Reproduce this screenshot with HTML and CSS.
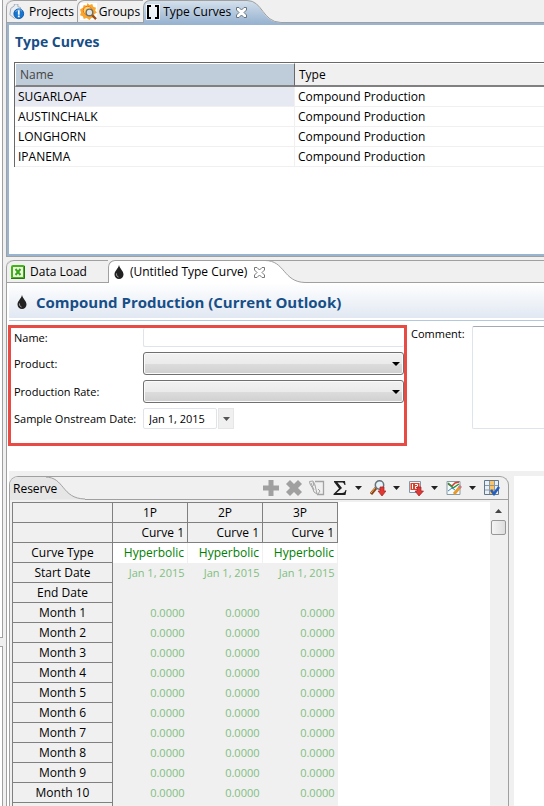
FILE: index.html
```html
<!DOCTYPE html>
<html lang="en">
<head>
<meta charset="utf-8">
<title>Type Curves</title>
<link rel="stylesheet" href="styles.css">
</head>
<body>
<div class="gutter"><div class="gutter-top"></div><div class="gutter-mid"></div><div class="gutter-bottom"></div></div>
<main class="workspace">
  <section class="pane pane-active">
    <nav class="tabs">
      <button class="tab tab-projects" type="button">
        <svg width="16" height="16" viewBox="0 0 18 18"><path d="M2 5l4-3V0h4v3l3 1 1 10-8 2-5-4z" fill="#e8edf2" stroke="#9aa7b4"/><circle cx="11" cy="11" r="5.500" fill="#1676cf" stroke="#0b56a5"/><path d="M7.500 9a4 4 0 0 1 7-1" stroke="#7ebcf0" fill="none"/><path d="M10 7h2v5h-2zM10 13h2v2h-2z" fill="#fff"/></svg>
        Projects</button>
      <button class="tab tab-groups" type="button">
        <svg width="17" height="17" viewBox="0 0 18 18"><rect width="18" height="18" fill="#fff"/><path d="M8 0l2 2 3-1 1 3 3 1-1 3 2 2-3 2v3l-3 1-2 2-3-2-3 1-1-3-3-1 1-3-1-3 3-2 1-3 3 1z" fill="#f9a62c"/><circle cx="8" cy="8" r="4.500" fill="#ffd36b" stroke="#f26d12"/><circle cx="10" cy="10" r="3.500" fill="#dfe4e6" stroke="#6f7069" stroke-width="1.500"/><path d="M13 13l4 4" stroke="#9a4c17" stroke-width="2.500"/></svg>
        Groups</button>
      <button class="tab tab-current" type="button">
        <svg width="14" height="16" viewBox="0 0 14 16"><rect width="14" height="16" fill="#fff" opacity=".75"/><path d="M5 2H2v12h3M9 2h3v12H9" fill="none" stroke="#000" stroke-width="2"/></svg>
        Type Curves
        <svg class="close" width="11" height="11" viewBox="0 0 11 11"><path d="M.5.5h2.500l2.500 2.500L8 .5h2.500V3L8 5.500 10.500 8v2.500H8L5.500 8 3 10.500H.5V8L3 5.500.5 3z" fill="#fff" stroke="#68747f"/></svg>
      </button>
      <svg class="swoop" width="34" height="23" viewBox="0 0 34 23"><defs><linearGradient id="blue" x2="0" y2="1"><stop stop-color="#d4e0ec"/><stop offset="1" stop-color="#99b4d1"/></linearGradient></defs><path d="M0 0h1C15 1 15 22 33 22.500V23H0z" fill="url(#blue)"/><path d="M0 .5C16 .5 15 22 34 22.500" fill="none" stroke="#a0a0a0"/></svg>
      <span class="tab-rest"></span>
    </nav>
    <div class="curves">
      <h1 class="heading">Type Curves</h1>
      <table class="list">
        <thead><tr><th class="sorted">Name</th><th>Type</th></tr></thead>
        <tbody>
          <tr><td class="chosen">SUGARLOAF</td><td>Compound Production</td></tr>
          <tr><td>AUSTINCHALK</td><td>Compound Production</td></tr>
          <tr><td>LONGHORN</td><td>Compound Production</td></tr>
          <tr><td>IPANEMA</td><td>Compound Production</td></tr>
        </tbody>
      </table>
    </div>
  </section>

  <section class="pane pane-editor">
    <nav class="tabs">
      <button class="tab tab-load" type="button">
        <svg width="14" height="14" viewBox="0 0 14 14"><rect x="1" y="1" width="12" height="12" rx="1" fill="#effbe4" stroke="#42b516" stroke-width="2"/><path d="M0 13.500h13.500V1" fill="none" stroke="#28750f"/><path d="M4.500 4l5 6M9.500 4l-5 6" stroke="#3aa61b" stroke-width="2"/></svg>
        Data Load</button>
      <button class="tab tab-current" type="button">
        <svg width="12" height="16" viewBox="0 0 12 16"><path d="M6 1c1 4 4.500 6 4.500 9.500a4.500 4.500 0 0 1-9 0C1.500 7 5 5 6 1z" fill="#222"/><path d="M3.500 9.500c0 2 .5 3 2 3.500" stroke="#aaa" fill="none"/></svg>
        (Untitled Type Curve)
        <svg class="close" width="11" height="11" viewBox="0 0 11 11"><path d="M.5.5h2.500l2.500 2.500L8 .5h2.500V3L8 5.500 10.500 8v2.500H8L5.500 8 3 10.500H.5V8L3 5.500.5 3z" fill="#fff" stroke="#777"/></svg>
      </button>
      <svg class="swoop" width="40" height="23" viewBox="0 0 40 23"><path d="M0 0C20 1 18 22 39 22.500V23H0z" fill="#fff"/><path d="M0 .5C20 .5 18 22 40 22.500" fill="none" stroke="#a0a0a0"/><path d="M0 .5H40" stroke="#a0a0a0"/></svg>
      <span class="tab-rest"></span>
    </nav>
    <header class="title">
      <svg width="12" height="16" viewBox="0 0 12 16"><path d="M6 1c1 4 4.500 6 4.500 9.500a4.500 4.500 0 0 1-9 0C1.500 7 5 5 6 1z" fill="#222"/><path d="M3.500 9.500c0 2 .5 3 2 3.500" stroke="#aaa" fill="none"/></svg>
      <h2 class="title-text">Compound Production (Current Outlook)</h2>
    </header>
    <form class="form">
      <div class="marked">
        <label for="name">Name:</label><input class="field name" id="name" type="text">
        <label for="product">Product:</label><span class="combo"><select id="product"><option></option></select></span>
        <label for="rate">Production Rate:</label><span class="combo"><select id="rate"><option></option></select></span>
        <label for="date">Sample Onstream Date:</label><span class="date"><input class="field" id="date" type="text" value="Jan 1, 2015"><button class="drop" type="button" aria-label="Choose date"><svg width="7" height="4" viewBox="0 0 7 4"><path d="M0 0h7L3.500 4z" fill="#555"/></svg></button></span>
      </div>
      <label class="comment-label" for="comment">Comment:</label>
      <textarea class="comment" id="comment"></textarea>
    </form>
    <div class="lower">
      <section class="folder">
        <div class="bar">
          <button class="reserve" type="button">Reserve</button>
          <svg class="swoop" width="40" height="23" viewBox="0 0 40 23"><path d="M0 0C20 1 16 22 39 22.500V23H0z" fill="#e6e6e6"/><path d="M0 .5C20 .5 16 22 40 22.500" fill="none" stroke="#a0a0a0"/></svg>
          <div class="tools">
            <button class="tool" type="button" aria-label="Add"><svg width="16" height="16" viewBox="0 0 16 16"><path d="M5.500 0h5v5.500H16v5h-5.500V16h-5v-5.500H0v-5h5.500z" fill="#a0a0a0"/></svg></button>
            <button class="tool" type="button" aria-label="Delete"><svg width="16" height="16" viewBox="0 0 16 16"><path d="M4 0l4 4 4-4 4 4-4 4 4 4-4 4-4-4-4 4-4-4 4-4-4-4z" fill="#a0a0a0"/></svg></button>
            <button class="tool" type="button" aria-label="Edit curve"><svg width="16" height="16" viewBox="0 0 16 16" fill="none" stroke="#a3a3a3"><path d="M6 1.500h8.500v13H8" stroke-width="1.300"/><path d="M.5 1.500L4 1l2 4 2 9-3-2L3.500 8 1 4zM2 3l3 7M4 2l1 4M9 9l2 2-2 3"/></svg></button>
            <button class="tool" type="button" aria-label="Sum"><svg width="16" height="16" viewBox="0 0 16 16"><path d="M2 1h11l.5 4h-1C12 3 11 2.500 9.500 2.500H5.500L10 8l-5.500 5H10c2 0 3-1 3.500-3h1L13.500 15H1.500v-1L7 8.500 2 2z" fill="#202020"/></svg></button>
            <button class="arrow" type="button" aria-label="Sum options"><svg width="7" height="4" viewBox="0 0 7 4"><path d="M0 0h7L3.500 4z" fill="#222"/></svg></button>
            <button class="tool" type="button" aria-label="Find"><svg width="16" height="16" viewBox="0 0 16 16"><path d="M6 8l-5 6" stroke="#8a431b" stroke-width="3"/><path d="M5 8l-4 5" stroke="#efb449"/><circle cx="9.500" cy="5" r="4.200" fill="#e5f2f8" stroke="#67727a" stroke-width="1.500"/><path d="M10 7h4v4h2l-4 5-4-5h2z" fill="#e03a32" stroke="#a81e1e" stroke-width=".7"/></svg></button>
            <button class="arrow" type="button" aria-label="Find options"><svg width="7" height="4" viewBox="0 0 7 4"><path d="M0 0h7L3.500 4z" fill="#222"/></svg></button>
            <button class="tool" type="button" aria-label="Dates"><svg width="16" height="16" viewBox="0 0 16 16"><path d="M1.500 1.500h11v11h-11z" fill="#f6f8fa" stroke="#8298aa"/><path d="M2.500 3h9v7h-9z" fill="#d9422b"/><path d="M4.500 4v5M7 4.500h2.500v2H7.500v2h2.500" stroke="#fff" fill="none"/><path d="M9 7h4v4h2.500L11 16l-4-5h2z" fill="#dc3b38" stroke="#a51c20" stroke-width=".7"/></svg></button>
            <button class="arrow" type="button" aria-label="Date options"><svg width="7" height="4" viewBox="0 0 7 4"><path d="M0 0h7L3.500 4z" fill="#222"/></svg></button>
            <button class="tool" type="button" aria-label="Chart"><svg width="16" height="16" viewBox="0 0 16 16"><path d="M1 1.500h13v13H1z" fill="#f7fafb" stroke="#889aa6"/><path d="M2 4l4 2 3-3 4-1" stroke="#cf4037" stroke-width="1.500" fill="none"/><path d="M2 3l5 5 6-4" stroke="#279442" stroke-width="1.500" fill="none"/><path d="M2 11l4-3 3 2" stroke="#3d87c8" fill="none"/><path d="M8 14l6-7" stroke="#e79a2c" stroke-width="3"/><path d="M13 8l2-2" stroke="#c77990" stroke-width="3"/></svg></button>
            <button class="arrow" type="button" aria-label="Chart options"><svg width="7" height="4" viewBox="0 0 7 4"><path d="M0 0h7L3.500 4z" fill="#222"/></svg></button>
            <button class="tool" type="button" aria-label="Columns"><svg width="16" height="16" viewBox="0 0 16 16"><path d="M.5.5h14v14H.5z" fill="#e9f0f5" stroke="#61788c"/><path d="M6 1h4v13H6z" fill="#ffc361"/><path d="M1 5.500h13M1 10h13M5.500 1v13M10.500 1v13" stroke="#8799a8"/><path d="M7 10l3 4 5-7" stroke="#245fc0" stroke-width="2.500" fill="none"/></svg></button>
          </div>
        </div>
        <div class="sheet-area">
          <table class="sheet">
            <colgroup><col class="col-label"><col class="col-case"><col class="col-case"><col class="col-case"></colgroup>
            <thead>
              <tr><th></th><th>1P</th><th>2P</th><th>3P</th></tr>
              <tr class="sub"><th></th><th>Curve 1</th><th>Curve 1</th><th>Curve 1</th></tr>
            </thead>
            <tbody>
              <tr class="kind"><th>Curve Type</th><td>Hyperbolic</td><td>Hyperbolic</td><td>Hyperbolic</td></tr>
              <tr><th>Start Date</th><td>Jan 1, 2015</td><td>Jan 1, 2015</td><td>Jan 1, 2015</td></tr>
              <tr><th>End Date</th><td></td><td></td><td></td></tr>
              <tr><th>Month 1</th><td>0.0000</td><td>0.0000</td><td>0.0000</td></tr>
              <tr><th>Month 2</th><td>0.0000</td><td>0.0000</td><td>0.0000</td></tr>
              <tr><th>Month 3</th><td>0.0000</td><td>0.0000</td><td>0.0000</td></tr>
              <tr><th>Month 4</th><td>0.0000</td><td>0.0000</td><td>0.0000</td></tr>
              <tr><th>Month 5</th><td>0.0000</td><td>0.0000</td><td>0.0000</td></tr>
              <tr><th>Month 6</th><td>0.0000</td><td>0.0000</td><td>0.0000</td></tr>
              <tr><th>Month 7</th><td>0.0000</td><td>0.0000</td><td>0.0000</td></tr>
              <tr><th>Month 8</th><td>0.0000</td><td>0.0000</td><td>0.0000</td></tr>
              <tr><th>Month 9</th><td>0.0000</td><td>0.0000</td><td>0.0000</td></tr>
              <tr><th>Month 10</th><td>0.0000</td><td>0.0000</td><td>0.0000</td></tr>
              <tr><th></th><td></td><td></td><td></td></tr>
            </tbody>
          </table>
          <div class="scroll">
            <svg width="7" height="4" viewBox="0 0 7 4"><path d="M0 4h7L3.500 0z" fill="#444"/></svg>
            <div class="thumb"></div>
          </div>
        </div>
      </section>
      <div class="blank"></div>
    </div>
  </section>
</main>
</body>
</html>
```

FILE: styles.css
```css
* { box-sizing: border-box; }

body {
  margin: 0;
  height: 100vh;
  overflow: hidden;
  display: flex;
  background: #f0f0f0;
  color: #000;
  font: 12px/16px "Open Sans", "Segoe UI", sans-serif;
}

button, input, select, textarea { font: inherit; color: inherit; margin: 0; }
button { border: 0; padding: 0; background: none; }
svg { display: block; flex: none; }
h1, h2 { margin: 0; }

/* Edge of the neighbouring view */
.gutter { width: 6px; flex: none; display: flex; flex-direction: column; padding-right: 3px; }
.gutter-top { flex: 639 0 0; background: #fff; border: solid #a0a0a0; border-width: 0 1px 1px 0; }
.gutter-mid { flex: 8 0 0; }
.gutter-bottom { flex: 159 0 0; background: #fff; border: solid #a0a0a0; border-width: 1px 1px 0 0; }

.workspace { flex: 1; min-width: 0; display: flex; flex-direction: column; gap: 3px; }

.pane { border-left: 1px solid #a0a0a0; border-top-left-radius: 7px; display: flex; flex-direction: column; background: #fff; }
.pane-active { min-height: 257px; border-bottom: 1px solid #a0a0a0; }
.pane-editor { flex: 1; min-height: 0; }

/* Tab strips */
.tabs { display: flex; height: 23px; background: #f0f0f0; border-top-left-radius: 7px; }
.tab {
  display: flex;
  align-items: center;
  gap: 5px;
  white-space: nowrap;
  border-bottom: 1px solid #a0a0a0;
  border-top: 1px solid #a0a0a0;
  border-top-left-radius: 7px;
}
.tab-projects { padding: 0 3px 0 2px; gap: 4px; }
.tab-groups { padding: 0 3px 0 2px; gap: 2px; border-left: 1px solid #a0a0a0; }
.tab-load { padding: 0 21px 0 4px; }
.tab-current { border-left: 1px solid #a0a0a0; border-bottom: 0; padding-left: 4px; background: #fff; }
.pane-active .tab-current { padding-left: 2px; gap: 3px; background: linear-gradient(#d4e0ec, #99b4d1); }
.close { margin-left: 2px; }
.tab-rest { flex: 1; border-bottom: 1px solid #a0a0a0; }
.pane-editor .tab-rest { border-top: 1px solid #a0a0a0; }

/* Type curve list */
.curves { flex: 1; border: solid #99b4d1; border-width: 2px 0 2px 2px; padding: 7px 0 0 5px; }
.heading { color: #174e87; font-size: 14px; line-height: 20px; padding-left: 1px; margin-bottom: 10px; }
.list { width: 100%; border-collapse: separate; border-spacing: 0; table-layout: fixed; border: solid #696969; border-width: 1px 0 0 1px; }
.list th {
  height: 24px;
  padding: 0 0 0 4px;
  font-weight: 400;
  text-align: left;
  background: #f0f0f0;
  border-bottom: 2px solid #808080;
  border-top: 1px solid #fff;
}
.list .sorted { width: 280px; background: #bfccda; color: #444; border-right: 1px solid #696969; border-left: 1px solid #fff; }
.list td { height: 20px; padding: 0 3px; border-bottom: 1px solid #f0f0f0; }
.list td:first-child { border-right: 1px solid #f0f0f0; }
.list .chosen { background: #e6e9f1; }

/* Editor title */
.title {
  margin-left: 2px;
  display: flex;
  align-items: center;
  gap: 8px;
  height: 38px;
  padding: 0 7px;
  background: linear-gradient(#fff, #e1e8f2 35px, #fff 35px);
  border-bottom: 1px solid #b4c8dc;
}
.title-text { color: #174e87; font-size: 15px; line-height: 20px; }

/* Form */
.form { display: flex; align-items: flex-start; padding: 4px 0 25px 1px; }
.marked {
  flex: none;
  width: 399px;
  border: 3px solid #e84a44;
  padding: 0 0 14px 3px;
  display: grid;
  grid-template-columns: 129px 1fr;
  row-gap: 5px;
  align-items: center;
}
.marked label { white-space: nowrap; font-size: 11px; }
.field { height: 21px; border: 1px solid #dfe3ea; border-radius: 2px; padding: 0 5px; background: #fff; }
.name { width: 100%; height: 19px; border-width: 0 0 1px 1px; }
.combo { position: relative; display: block; }
.combo select {
  display: block;
  appearance: none;
  width: 100%;
  height: 23px;
  border: 1px solid #707070;
  border-radius: 3px;
  background: linear-gradient(#f2f2f2, #ebebeb 50%, #dddddd 50%, #cfcfcf);
  box-shadow: inset 0 0 0 1px #fafafa;
}
.combo::after {
  content: "";
  position: absolute;
  right: 4px;
  top: 10px;
  border: solid transparent;
  border-width: 4px 4px 0;
  border-top-color: #000;
  pointer-events: none;
}
.date { display: flex; gap: 1px; }
.date .field { width: 74px; font-size: 11px; }
.drop { width: 16px; height: 21px; display: grid; place-items: center; background: #f0f0f0; border: 1px solid #e6e6e6; }
.comment-label { padding: 1px 5px 0 4px; flex: none; width: 65px; white-space: nowrap; font-size: 11px; }
.comment { flex: 1; min-width: 0; height: 103px; margin-top: 1px; border: solid #dfe3ea; border-width: 1px 0 1px 1px; border-top-color: #a8a8b0; resize: none; border-radius: 2px 0 0 2px; }

/* Reserve sheet */
.lower { flex: 1; min-height: 0; margin-left: 2px; padding-top: 5px; background: #f0f0f0; display: flex; gap: 5px; }
.folder { width: 500px; flex: none; border: 1px solid #a0a0a0; border-bottom: 0; border-radius: 9px 9px 0 0; display: flex; flex-direction: column; overflow: hidden; }
.blank { flex: 1; background: #fff; }
.bar { display: flex; height: 23px; flex: none; }
.reserve { position: relative; z-index: 1; padding: 0 0 0 3px; background: linear-gradient(90deg, #e6e6e6 36px, transparent 36px); }
.bar .swoop { margin: -1px 0 0 -12px; height: 24px; }
.tools { flex: 1; display: flex; justify-content: flex-end; padding-right: 5px; border-bottom: 1px solid #a0a0a0; }
.tool { width: 23px; display: grid; place-items: center; }
.arrow { width: 15px; display: grid; place-items: center; }
.sheet-area { flex: 1; min-height: 0; margin: 2px 2px 0 2px; background: #fff; display: flex; justify-content: space-between; align-items: stretch; overflow: hidden; }
.sheet { align-self: flex-start; width: 326px; border-collapse: collapse; table-layout: fixed; }
.col-label { width: 100px; }
.col-case { width: 75px; }
.sheet th, .sheet td { height: 20px; padding: 0 3px; line-height: 16px; background: #f0f0f0; }
.sheet th { border: 1px solid #808080; font-weight: 400; text-align: center; }
.sheet .sub th { text-align: right; }
.sheet td { text-align: right; color: #7fbf7f; font-size: 11px; }
.sheet .kind td { background: #fff; color: #008000; border-right: 1px solid #f0f0f0; font-size: 12px; }
.scroll { width: 16px; background: #f0f0f0; display: flex; flex-direction: column; align-items: center; padding-top: 7px; gap: 7px; }
.thumb { width: 15px; height: 15px; border: 1px solid #979797; border-radius: 2px; background: linear-gradient(90deg, #f4f4f4, #ddd); }
```
